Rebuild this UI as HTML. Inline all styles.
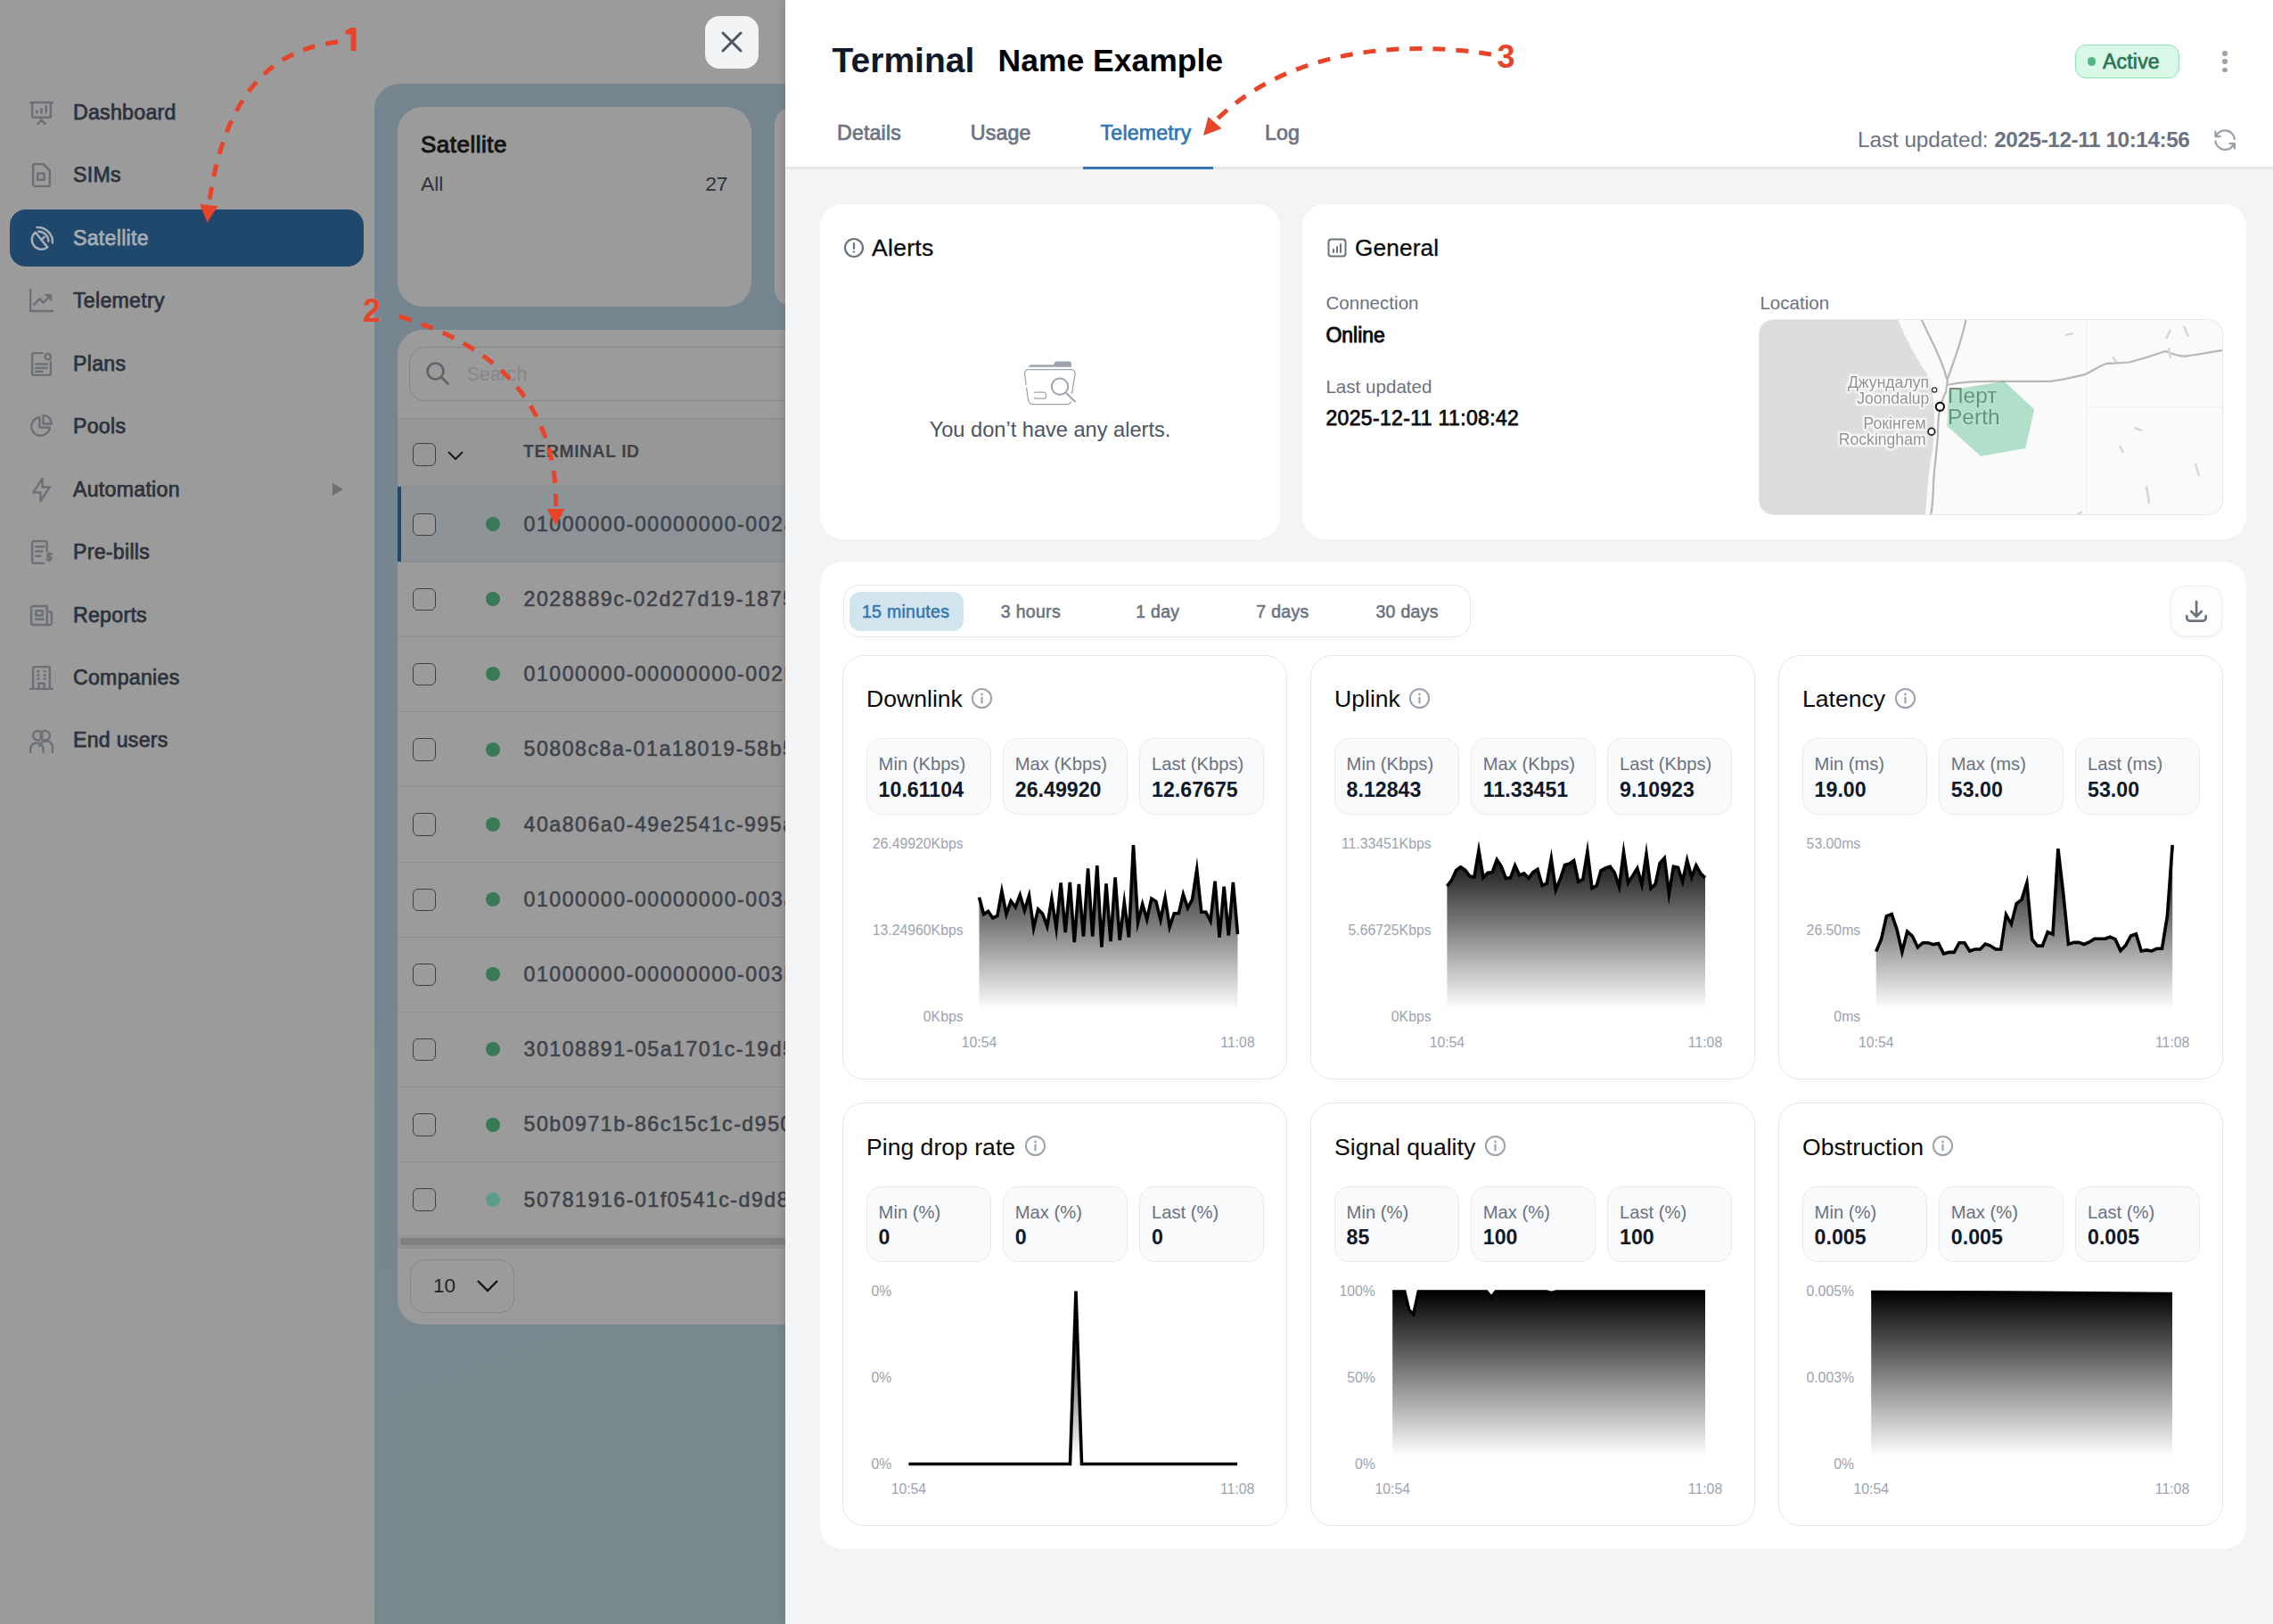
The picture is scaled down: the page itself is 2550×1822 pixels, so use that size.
<!DOCTYPE html>
<html><head><meta charset="utf-8"><style>
html,body{margin:0;padding:0;width:2550px;height:1822px;overflow:hidden;background:#fff;position:relative;font-family:"Liberation Sans", sans-serif}
.t{position:absolute;white-space:nowrap;font-family:"Liberation Sans", sans-serif}
</style></head><body>
<div style="position:absolute;left:0px;top:0px;width:881px;height:1822px;background:#9b9b9b"></div><div style="position:absolute;left:11px;top:235px;width:397px;height:64px;background:#1f486c;border-radius:18px"></div><svg style="position:absolute;left:33px;top:113.0px" width="27" height="27" viewBox="0 0 26 26"><path d="M1 2h24M3 2v15a1 1 0 0 0 1 1h18a1 1 0 0 0 1-1V2M13 18v3M9 25l4-4 4 4M8 13v-2M13 13V9M18 13V6" stroke="#6c7077" stroke-width="2.4" fill="none" stroke-linecap="round" stroke-linejoin="round"/></svg><div class="t" style="left:82.00px;top:114.95px;font-size:23.1px;line-height:23.1px;color:#2d323b;font-weight:400;letter-spacing:0.3px;-webkit-text-stroke:0.75px #2d323b">Dashboard</div><svg style="position:absolute;left:33px;top:183.4px" width="27" height="27" viewBox="0 0 26 26"><path d="M6 1h9l7 7v15a2 2 0 0 1-2 2H6a2 2 0 0 1-2-2V3a2 2 0 0 1 2-2zM9 11h7v7H9z" stroke="#6c7077" stroke-width="2.4" fill="none" stroke-linecap="round" stroke-linejoin="round"/></svg><div class="t" style="left:82.00px;top:185.40px;font-size:23.1px;line-height:23.1px;color:#2d323b;font-weight:400;letter-spacing:0.3px;-webkit-text-stroke:0.75px #2d323b">SIMs</div><svg style="position:absolute;left:33px;top:253.9px" width="27" height="27" viewBox="0 0 26 26"><path d="M6.5 6.5A9.6 9.6 0 0 0 19.5 22.5Z" stroke="#a9adb2" stroke-width="2.4" fill="none" stroke-linecap="round" stroke-linejoin="round"/><path d="M13 14.5l3-3M9.8 5.5A10.5 10.5 0 0 1 20.5 16.2M8.2 1A16 16 0 0 1 25 17.8" stroke="#a9adb2" stroke-width="2.4" fill="none" stroke-linecap="round" stroke-linejoin="round"/></svg><div class="t" style="left:82.00px;top:255.85px;font-size:23.1px;line-height:23.1px;color:#a9adb2;font-weight:400;letter-spacing:0.3px;-webkit-text-stroke:0.75px #a9adb2">Satellite</div><svg style="position:absolute;left:33px;top:324.4px" width="27" height="27" viewBox="0 0 26 26"><path d="M1 1v23h24M5 17l6-6 4 4 8-8M18 7h5v5" stroke="#6c7077" stroke-width="2.4" fill="none" stroke-linecap="round" stroke-linejoin="round"/></svg><div class="t" style="left:82.00px;top:326.30px;font-size:23.1px;line-height:23.1px;color:#2d323b;font-weight:400;letter-spacing:0.3px;-webkit-text-stroke:0.75px #2d323b">Telemetry</div><svg style="position:absolute;left:33px;top:394.8px" width="27" height="27" viewBox="0 0 26 26"><path d="M14 1H5a2 2 0 0 0-2 2v20a2 2 0 0 0 2 2h16a2 2 0 0 0 2-2V10M7 13h12M7 17h12M7 21h7" stroke="#6c7077" stroke-width="2.4" fill="none" stroke-linecap="round" stroke-linejoin="round"/><circle cx="20" cy="5" r="3" stroke="#6c7077" stroke-width="2.4" fill="none" stroke-linecap="round" stroke-linejoin="round"/></svg><div class="t" style="left:82.00px;top:396.75px;font-size:23.1px;line-height:23.1px;color:#2d323b;font-weight:400;letter-spacing:0.3px;-webkit-text-stroke:0.75px #2d323b">Plans</div><svg style="position:absolute;left:33px;top:465.2px" width="27" height="27" viewBox="0 0 26 26"><path d="M11 3a10 10 0 1 0 11 11H11z" stroke="#6c7077" stroke-width="2.4" fill="none" stroke-linecap="round" stroke-linejoin="round"/><path d="M15 1v9h9a9 9 0 0 0-9-9z" stroke="#6c7077" stroke-width="2.4" fill="none" stroke-linecap="round" stroke-linejoin="round"/></svg><div class="t" style="left:82.00px;top:467.20px;font-size:23.1px;line-height:23.1px;color:#2d323b;font-weight:400;letter-spacing:0.3px;-webkit-text-stroke:0.75px #2d323b">Pools</div><svg style="position:absolute;left:33px;top:535.7px" width="27" height="27" viewBox="0 0 26 26"><path d="M14 1v9h8L12 25v-9H4z" stroke="#6c7077" stroke-width="2.4" fill="none" stroke-linecap="round" stroke-linejoin="round"/></svg><div class="t" style="left:82.00px;top:537.65px;font-size:23.1px;line-height:23.1px;color:#2d323b;font-weight:400;letter-spacing:0.3px;-webkit-text-stroke:0.75px #2d323b">Automation</div><svg style="position:absolute;left:33px;top:606.2px" width="27" height="27" viewBox="0 0 26 26"><path d="M19 12V3a2 2 0 0 0-2-2H5a2 2 0 0 0-2 2v20a2 2 0 0 0 2 2h10M7 7h9M7 12h7M7 17h5" stroke="#6c7077" stroke-width="2.4" fill="none" stroke-linecap="round" stroke-linejoin="round"/><path d="M24 15h-3a1.5 1.5 0 0 0 0 3h1a1.5 1.5 0 0 1 0 3h-3M21.5 14v1.5M21.5 21v1.5" stroke="#6c7077" stroke-width="2.4" fill="none" stroke-linecap="round" stroke-linejoin="round"/></svg><div class="t" style="left:82.00px;top:608.10px;font-size:23.1px;line-height:23.1px;color:#2d323b;font-weight:400;letter-spacing:0.3px;-webkit-text-stroke:0.75px #2d323b">Pre-bills</div><svg style="position:absolute;left:33px;top:676.6px" width="27" height="27" viewBox="0 0 26 26"><path d="M4 3h15v20H4a2 2 0 0 1-2-2V5a2 2 0 0 1 2-2zM19 9h3a2 2 0 0 1 2 2v10a2 2 0 0 1-2 2h-3M7 8h7v5H7zM7 17h8" stroke="#6c7077" stroke-width="2.4" fill="none" stroke-linecap="round" stroke-linejoin="round"/></svg><div class="t" style="left:82.00px;top:678.55px;font-size:23.1px;line-height:23.1px;color:#2d323b;font-weight:400;letter-spacing:0.3px;-webkit-text-stroke:0.75px #2d323b">Reports</div><svg style="position:absolute;left:33px;top:747.1px" width="27" height="27" viewBox="0 0 26 26"><path d="M1 25h24M4 25V3a2 2 0 0 1 2-2h14a2 2 0 0 1 2 2v22M10 25v-6h6v6M9 6h1M9 10h1M9 14h1M16 6h1M16 10h1M16 14h1" stroke="#6c7077" stroke-width="2.4" fill="none" stroke-linecap="round" stroke-linejoin="round"/></svg><div class="t" style="left:82.00px;top:749.00px;font-size:23.1px;line-height:23.1px;color:#2d323b;font-weight:400;letter-spacing:0.3px;-webkit-text-stroke:0.75px #2d323b">Companies</div><svg style="position:absolute;left:33px;top:817.5px" width="27" height="27" viewBox="0 0 26 26"><circle cx="9" cy="7" r="5" stroke="#6c7077" stroke-width="2.4" fill="none" stroke-linecap="round" stroke-linejoin="round"/><circle cx="17" cy="7" r="5" stroke="#6c7077" stroke-width="2.4" fill="none" stroke-linecap="round" stroke-linejoin="round"/><path d="M1 25v-3a7 7 0 0 1 14 0v3M11 18a7 7 0 0 1 14 4v3" stroke="#6c7077" stroke-width="2.4" fill="none" stroke-linecap="round" stroke-linejoin="round"/></svg><div class="t" style="left:82.00px;top:819.45px;font-size:23.1px;line-height:23.1px;color:#2d323b;font-weight:400;letter-spacing:0.3px;-webkit-text-stroke:0.75px #2d323b">End users</div><svg style="position:absolute;left:372px;top:541px" width="14" height="16" viewBox="0 0 14 16"><path d="M1 1L13 8L1 15z" fill="#6c7077"/></svg><div style="position:absolute;left:420px;top:94px;width:461px;height:1728px;background:linear-gradient(160deg,#768690 0%,#768690 55%,#798a8c 100%);border-top-left-radius:28px"></div><div style="position:absolute;left:446px;top:120px;width:397px;height:224px;background:#9b9b9b;border-radius:28px"></div><div style="position:absolute;left:869px;top:120px;width:40px;height:224px;background:#9b9b9b;border-radius:28px"></div><div class="t" style="left:472.00px;top:148.99px;font-size:26px;line-height:26px;color:#141414;font-weight:400;letter-spacing:0.5px;-webkit-text-stroke:1px #141414">Satellite</div><div class="t" style="left:472.00px;top:194.50px;font-size:22.8px;line-height:22.8px;color:#2d323b;font-weight:400;letter-spacing:0px;">All</div><div class="t" style="right:1733.50px;top:194.50px;font-size:22.8px;line-height:22.8px;color:#2d323b;font-weight:400;letter-spacing:0px;">27</div><div style="position:absolute;left:446px;top:370px;width:480px;height:1116px;background:#9b9b9b;border-bottom-left-radius:28px;border-top-left-radius:28px"></div><div style="position:absolute;left:459px;top:389px;width:460px;height:61px;border:1.5px solid #858688;border-radius:18px;box-sizing:border-box"></div><svg style="position:absolute;left:476px;top:404px" width="30" height="30" viewBox="0 0 30 30"><circle cx="12.5" cy="12.5" r="9" stroke="#5e6269" stroke-width="2.6" fill="none"/><path d="M19 19l7.5 7.5" stroke="#5e6269" stroke-width="2.6" stroke-linecap="round"/></svg><div class="t" style="left:523.40px;top:410.30px;font-size:21.5px;line-height:21.5px;color:#85888d;font-weight:400;letter-spacing:0px;">Search</div><div style="position:absolute;left:446px;top:469px;width:435px;height:1.5px;background:#8b8b8b"></div><div style="position:absolute;left:446px;top:470px;width:435px;height:76px;background:#979797"></div><div style="position:absolute;left:446px;top:545px;width:435px;height:1.5px;background:#8e8e8e"></div><div style="position:absolute;left:463px;top:497px;width:26px;height:26px;border:1.6px solid #3d4047;border-radius:6px;box-sizing:border-box"></div><svg style="position:absolute;left:501px;top:504px" width="20" height="14" viewBox="0 0 20 14"><path d="M2 3l8 8 8-8" stroke="#1a1a1a" stroke-width="2" fill="none"/></svg><div class="t" style="left:587.00px;top:497.48px;font-size:19.4px;line-height:19.4px;color:#3d4148;font-weight:700;letter-spacing:0.55px;">TERMINAL ID</div><div style="position:absolute;left:446px;top:546px;width:435px;height:84px;background:#8e9398"></div><div style="position:absolute;left:446px;top:546px;width:3.5px;height:84px;background:#1f486c"></div><div style="position:absolute;left:463px;top:575.5px;width:25.5px;height:25.5px;border:1.6px solid #3d4047;border-radius:6px;box-sizing:border-box;background:#9b9b9b"></div><div style="position:absolute;left:545px;top:580.0px;width:16px;height:16px;border-radius:50%;background:#387a55"></div><div class="t" style="left:587.50px;top:576.76px;font-size:23.2px;line-height:23.2px;color:#3e424a;font-weight:400;letter-spacing:1.5px;-webkit-text-stroke:0.55px #3e424a">01000000-00000000-002a</div><div style="position:absolute;left:446px;top:629.7px;width:435px;height:1px;background:#8d8d8d"></div><div style="position:absolute;left:463px;top:659.7px;width:25.5px;height:25.5px;border:1.6px solid #3d4047;border-radius:6px;box-sizing:border-box;background:#9b9b9b"></div><div style="position:absolute;left:545px;top:664.2px;width:16px;height:16px;border-radius:50%;background:#387a55"></div><div class="t" style="left:587.50px;top:660.96px;font-size:23.2px;line-height:23.2px;color:#3e424a;font-weight:400;letter-spacing:1.5px;-webkit-text-stroke:0.55px #3e424a">2028889c-02d27d19-1875a</div><div style="position:absolute;left:446px;top:713.9px;width:435px;height:1px;background:#8d8d8d"></div><div style="position:absolute;left:463px;top:743.9px;width:25.5px;height:25.5px;border:1.6px solid #3d4047;border-radius:6px;box-sizing:border-box;background:#9b9b9b"></div><div style="position:absolute;left:545px;top:748.4px;width:16px;height:16px;border-radius:50%;background:#387a55"></div><div class="t" style="left:587.50px;top:745.16px;font-size:23.2px;line-height:23.2px;color:#3e424a;font-weight:400;letter-spacing:1.5px;-webkit-text-stroke:0.55px #3e424a">01000000-00000000-002b</div><div style="position:absolute;left:446px;top:798.1px;width:435px;height:1px;background:#8d8d8d"></div><div style="position:absolute;left:463px;top:828.1px;width:25.5px;height:25.5px;border:1.6px solid #3d4047;border-radius:6px;box-sizing:border-box;background:#9b9b9b"></div><div style="position:absolute;left:545px;top:832.6px;width:16px;height:16px;border-radius:50%;background:#387a55"></div><div class="t" style="left:587.50px;top:829.36px;font-size:23.2px;line-height:23.2px;color:#3e424a;font-weight:400;letter-spacing:1.5px;-webkit-text-stroke:0.55px #3e424a">50808c8a-01a18019-58b5a</div><div style="position:absolute;left:446px;top:882.3px;width:435px;height:1px;background:#8d8d8d"></div><div style="position:absolute;left:463px;top:912.3px;width:25.5px;height:25.5px;border:1.6px solid #3d4047;border-radius:6px;box-sizing:border-box;background:#9b9b9b"></div><div style="position:absolute;left:545px;top:916.8px;width:16px;height:16px;border-radius:50%;background:#387a55"></div><div class="t" style="left:587.50px;top:913.56px;font-size:23.2px;line-height:23.2px;color:#3e424a;font-weight:400;letter-spacing:1.5px;-webkit-text-stroke:0.55px #3e424a">40a806a0-49e2541c-995a</div><div style="position:absolute;left:446px;top:966.5px;width:435px;height:1px;background:#8d8d8d"></div><div style="position:absolute;left:463px;top:996.5px;width:25.5px;height:25.5px;border:1.6px solid #3d4047;border-radius:6px;box-sizing:border-box;background:#9b9b9b"></div><div style="position:absolute;left:545px;top:1001.0px;width:16px;height:16px;border-radius:50%;background:#387a55"></div><div class="t" style="left:587.50px;top:997.76px;font-size:23.2px;line-height:23.2px;color:#3e424a;font-weight:400;letter-spacing:1.5px;-webkit-text-stroke:0.55px #3e424a">01000000-00000000-003a</div><div style="position:absolute;left:446px;top:1050.7px;width:435px;height:1px;background:#8d8d8d"></div><div style="position:absolute;left:463px;top:1080.7px;width:25.5px;height:25.5px;border:1.6px solid #3d4047;border-radius:6px;box-sizing:border-box;background:#9b9b9b"></div><div style="position:absolute;left:545px;top:1085.2px;width:16px;height:16px;border-radius:50%;background:#387a55"></div><div class="t" style="left:587.50px;top:1081.96px;font-size:23.2px;line-height:23.2px;color:#3e424a;font-weight:400;letter-spacing:1.5px;-webkit-text-stroke:0.55px #3e424a">01000000-00000000-003b</div><div style="position:absolute;left:446px;top:1134.9px;width:435px;height:1px;background:#8d8d8d"></div><div style="position:absolute;left:463px;top:1164.9px;width:25.5px;height:25.5px;border:1.6px solid #3d4047;border-radius:6px;box-sizing:border-box;background:#9b9b9b"></div><div style="position:absolute;left:545px;top:1169.4px;width:16px;height:16px;border-radius:50%;background:#387a55"></div><div class="t" style="left:587.50px;top:1166.16px;font-size:23.2px;line-height:23.2px;color:#3e424a;font-weight:400;letter-spacing:1.5px;-webkit-text-stroke:0.55px #3e424a">30108891-05a1701c-19d5a</div><div style="position:absolute;left:446px;top:1219.1px;width:435px;height:1px;background:#8d8d8d"></div><div style="position:absolute;left:463px;top:1249.1px;width:25.5px;height:25.5px;border:1.6px solid #3d4047;border-radius:6px;box-sizing:border-box;background:#9b9b9b"></div><div style="position:absolute;left:545px;top:1253.6px;width:16px;height:16px;border-radius:50%;background:#387a55"></div><div class="t" style="left:587.50px;top:1250.36px;font-size:23.2px;line-height:23.2px;color:#3e424a;font-weight:400;letter-spacing:1.5px;-webkit-text-stroke:0.55px #3e424a">50b0971b-86c15c1c-d950a</div><div style="position:absolute;left:446px;top:1303.3000000000002px;width:435px;height:1px;background:#8d8d8d"></div><div style="position:absolute;left:463px;top:1333.3000000000002px;width:25.5px;height:25.5px;border:1.6px solid #3d4047;border-radius:6px;box-sizing:border-box;background:#9b9b9b"></div><div style="position:absolute;left:545px;top:1337.8px;width:16px;height:16px;border-radius:50%;background:#5a9d8c"></div><div class="t" style="left:587.50px;top:1334.56px;font-size:23.2px;line-height:23.2px;color:#3e424a;font-weight:400;letter-spacing:1.5px;-webkit-text-stroke:0.55px #3e424a">50781916-01f0541c-d9d8a</div><div style="position:absolute;left:446px;top:1386px;width:435px;height:13px;background:#939393"></div><div style="position:absolute;left:449px;top:1389px;width:432px;height:8px;background:#7f7f7f;border-radius:4px"></div><div style="position:absolute;left:446px;top:1399px;width:435px;height:1.5px;background:#8f8f8f"></div><div style="position:absolute;left:459.5px;top:1413px;width:117.5px;height:60px;border:1.5px solid #878787;border-radius:16px;box-sizing:border-box"></div><div class="t" style="left:486.00px;top:1431.95px;font-size:22.5px;line-height:22.5px;color:#1f2228;font-weight:400;letter-spacing:0px;">10</div><svg style="position:absolute;left:534px;top:1434px" width="26" height="18" viewBox="0 0 26 18"><path d="M2 3l11 11 11-11" stroke="#141414" stroke-width="2.4" fill="none"/></svg><div style="position:absolute;left:791px;top:18px;width:60px;height:59px;background:#f2f3f5;border-radius:16px"></div><svg style="position:absolute;left:807px;top:33px" width="28" height="28" viewBox="0 0 28 28"><path d="M4 4l20 20M24 4L4 24" stroke="#4b5563" stroke-width="3" stroke-linecap="round"/></svg><div style="position:absolute;left:881px;top:0px;width:1669px;height:1822px;background:#f3f4f6;box-shadow:-3px 0 10px rgba(0,0,0,0.10)"></div><div style="position:absolute;left:881px;top:0px;width:1669px;height:187px;background:#ffffff"></div><div style="position:absolute;left:881px;top:187px;width:1669px;height:3px;background:#e5e7eb"></div><div style="position:absolute;left:1215px;top:187px;width:146px;height:3px;background:#3276b5"></div><div class="t" style="left:933.60px;top:48.49px;font-size:39px;line-height:39px;color:#111827;font-weight:700;letter-spacing:0px;">Terminal</div><div class="t" style="left:1119.50px;top:50.95px;font-size:35.5px;line-height:35.5px;color:#000000;font-weight:700;letter-spacing:0px;">Name Example</div><div class="t" style="left:939.00px;top:137.86px;font-size:23.2px;line-height:23.2px;color:#6b7280;font-weight:400;letter-spacing:0.15px;-webkit-text-stroke:0.7px #6b7280">Details</div><div class="t" style="left:1088.80px;top:137.86px;font-size:23.2px;line-height:23.2px;color:#6b7280;font-weight:400;letter-spacing:0.15px;-webkit-text-stroke:0.7px #6b7280">Usage</div><div class="t" style="left:1234.60px;top:137.86px;font-size:23.2px;line-height:23.2px;color:#3176b3;font-weight:400;letter-spacing:0.15px;-webkit-text-stroke:0.7px #3176b3">Telemetry</div><div class="t" style="left:1419.00px;top:137.86px;font-size:23.2px;line-height:23.2px;color:#6b7280;font-weight:400;letter-spacing:0.15px;-webkit-text-stroke:0.7px #6b7280">Log</div><div class="t" style="left:2084.00px;top:144.65px;font-size:24.4px;line-height:24.4px;color:#6b7280;font-weight:400;letter-spacing:-0.1px;">Last updated: <b style="font-weight:700;letter-spacing:-0.45px">2025-12-11 10:14:56</b></div><svg style="position:absolute;left:2480px;top:140.9px" width="32.3" height="32.3" viewBox="0 0 24 24"><path d="M20 11A8.1 8.1 0 0 0 4.5 9M4 5v4h4M4 13a8.1 8.1 0 0 0 15.5 2M20 19v-4h-4" stroke="#9aa1ab" stroke-width="1.7" fill="none" stroke-linecap="round" stroke-linejoin="round"/></svg><div style="position:absolute;left:2328px;top:50px;width:117px;height:38px;background:#d9f8e7;border:1.5px solid #8fe3b6;border-radius:12px;box-sizing:border-box"></div><div style="position:absolute;left:2341.6px;top:64.4px;width:9.4px;height:9.4px;border-radius:50%;background:#55b786"></div><div class="t" style="left:2359.00px;top:58.03px;font-size:23px;line-height:23px;color:#2d7352;font-weight:400;letter-spacing:0.2px;-webkit-text-stroke:0.7px #2d7352">Active</div><div style="position:absolute;left:2493.1px;top:57.1px;width:5.8px;height:5.8px;border-radius:50%;background:#9ca3af"></div><div style="position:absolute;left:2493.1px;top:66.3px;width:5.8px;height:5.8px;border-radius:50%;background:#9ca3af"></div><div style="position:absolute;left:2493.1px;top:75.6px;width:5.8px;height:5.8px;border-radius:50%;background:#9ca3af"></div><div style="position:absolute;left:920px;top:229px;width:516px;height:376px;background:#fff;border-radius:26px"></div><div style="position:absolute;left:1461px;top:229px;width:1059px;height:376px;background:#fff;border-radius:26px"></div><div style="position:absolute;left:920px;top:630px;width:1600px;height:1108px;background:#fff;border-radius:26px"></div><svg style="position:absolute;left:946px;top:266px" width="24" height="24" viewBox="0 0 24 24"><circle cx="12" cy="12" r="10" stroke="#6b7280" stroke-width="2.2" fill="none"/><path d="M12 7v6" stroke="#6b7280" stroke-width="2.2" stroke-linecap="round"/><circle cx="12" cy="16.6" r="1.2" fill="#6b7280"/></svg><div class="t" style="left:978.00px;top:264.87px;font-size:26.5px;line-height:26.5px;color:#0a0a0a;font-weight:400;letter-spacing:0.3px;-webkit-text-stroke:0.3px #0a0a0a">Alerts</div><svg style="position:absolute;left:0;top:0;overflow:visible" width="1" height="1"><path d="M1153.6 411.8L1155.8 409.3H1181.7L1183.6 406.3Q1184.3 405.6 1185.2 405.6H1200.2Q1201.9 405.8 1201.9 407.5V411.8Z" fill="#9ca3af"/><path d="M1173 414.6H1202Q1206.2 414.8 1206.2 419.4L1202.4 441.8M1201.6 450.8Q1200.2 453.6 1197.8 453.6H1158.4Q1154.8 453.4 1153.6 449.2L1151.5 434.6M1151.1 431.8L1149.6 419.4Q1149.8 414.8 1153.6 414.6H1173" stroke="#9ca3af" stroke-width="1.25" fill="none"/><path d="M1160 440.6Q1160.6 440 1161.6 440H1171.2Q1173.6 440.2 1173.6 443.6Q1173.4 447.2 1171.2 447.2H1161.6Q1160.2 447 1159.9 445.6" stroke="#9ca3af" stroke-width="1.25" fill="none"/><circle cx="1189" cy="433.6" r="9.2" stroke="#9ca3af" stroke-width="2" fill="none"/><path d="M1196.4 441.2L1206 450.4" stroke="#9ca3af" stroke-width="2" stroke-linecap="round"/></svg><div class="t" style="left:1178.00px;transform:translateX(-50%);top:471.32px;font-size:23.6px;line-height:23.6px;color:#4b5563;font-weight:400;letter-spacing:0px;">You don’t have any alerts.</div><svg style="position:absolute;left:1489px;top:267px" width="22" height="22" viewBox="0 0 22 22"><rect x="1.5" y="1.5" width="19" height="19" rx="3" stroke="#6b7280" stroke-width="2" fill="none"/><path d="M7 16v-3M11 16v-6M15 16V7" stroke="#6b7280" stroke-width="2" stroke-linecap="round"/></svg><div class="t" style="left:1520.00px;top:265.12px;font-size:26.2px;line-height:26.2px;color:#0a0a0a;font-weight:400;letter-spacing:0.15px;-webkit-text-stroke:0.3px #0a0a0a">General</div><div class="t" style="left:1487.40px;top:330.26px;font-size:20.6px;line-height:20.6px;color:#6b7280;font-weight:400;letter-spacing:0px;">Connection</div><div class="t" style="left:1487.40px;top:364.83px;font-size:23px;line-height:23px;color:#0a0a0a;font-weight:400;letter-spacing:0px;-webkit-text-stroke:0.9px #0a0a0a">Online</div><div class="t" style="left:1487.40px;top:423.76px;font-size:20.6px;line-height:20.6px;color:#6b7280;font-weight:400;letter-spacing:0px;">Last updated</div><div class="t" style="left:1487.40px;top:458.33px;font-size:23px;line-height:23px;color:#0a0a0a;font-weight:400;letter-spacing:0px;-webkit-text-stroke:0.75px #0a0a0a"><span style="letter-spacing:0.35px">2025-12-11 11:08:42</span></div><div class="t" style="left:1974.40px;top:330.26px;font-size:20.6px;line-height:20.6px;color:#6b7280;font-weight:400;letter-spacing:0px;">Location</div><svg style="position:absolute;left:1973px;top:358px" width="521" height="220" viewBox="1973 358 521 220">
<defs><clipPath id="mc"><rect x="1973.5" y="358.5" width="520" height="219" rx="16"/></clipPath>
<filter id="halo" x="-20%" y="-50%" width="140%" height="200%"><feMorphology operator="dilate" radius="1.6" in="SourceAlpha" result="d"/><feGaussianBlur in="d" stdDeviation="1.2" result="b"/><feFlood flood-color="#fff" flood-opacity="0.85"/><feComposite in2="b" operator="in" result="h"/><feMerge><feMergeNode in="h"/><feMergeNode in="SourceGraphic"/></feMerge></filter></defs>
<g clip-path="url(#mc)">
<rect x="1973" y="358" width="521" height="220" fill="#fafafa"/>
<path d="M1973 358H2129C2140 385 2152 405 2162 420C2170 440 2172 470 2168 505C2163 530 2162 555 2160 578H1973Z" fill="#dcdddd"/>
<path d="M2341 358V578M2341 456.7H2494" stroke="#efefef" stroke-width="1"/>
<path d="M2155.6 358C2165 380 2178 400 2184 425M2205.8 358C2200 385 2192 405 2185 425L2183 440C2175 455 2174 470 2174 490L2171 520C2168 540 2170 560 2166 578" stroke="#b9b5b0" stroke-width="2.2" fill="none"/>
<path d="M2185 432C2200 428 2215 428 2236 427.8L2301 427.8C2315 426 2330 422 2338.7 420.3C2350 415 2356 410 2363.7 407.8L2388.8 406.5C2405 402 2418 398 2429 394C2440 398 2445 400 2451.5 399.7C2470 397 2480 395 2494 393.2" stroke="#b9b5b0" stroke-width="2.2" fill="none"/>
<path d="M2317 376l9-2M2370 400l4 6M2430 380l5-10M2455 378l-5-12M2433 390l2 12M2395 480l8 3M2463 520l4 14M2408 545l3 20M2378 500l4 8M2330 578l6-4" stroke="#d6d6d6" stroke-width="2.5"/>
<g filter="url(#halo)" font-family="Liberation Sans" fill="#8d8d8d">
<text x="2164" y="435" font-size="17.6" text-anchor="end">Джундалуп</text>
<text x="2164.4" y="452.6" font-size="17.6" text-anchor="end">Joondalup</text>
<text x="2160.6" y="481.3" font-size="17.6" text-anchor="end">Рокінгем</text>
<text x="2160.6" y="498.7" font-size="17.6" text-anchor="end">Rockingham</text>
<text x="2185" y="452.3" font-size="24.5" fill="#858585">Перт</text>
<text x="2185" y="476" font-size="24.5" fill="#858585">Perth</text>
</g>
<path d="M2185.7 437.9L2248.4 427.8L2282.2 459.2L2272.2 503L2222 511.8L2184.5 478Z" fill="rgb(34,170,102)" fill-opacity="0.33"/>
<circle cx="2170.2" cy="437.4" r="2.6" fill="#fff" stroke="#333" stroke-width="1.3"/>
<circle cx="2176.4" cy="456.2" r="4.6" fill="#fff" stroke="#111" stroke-width="2.2"/>
<circle cx="2166.9" cy="484.2" r="3.8" fill="#fff" stroke="#222" stroke-width="1.8"/>
</g>
<rect x="1973.5" y="358.5" width="520" height="219" rx="16" fill="none" stroke="#e5e7eb" stroke-width="1"/>
</svg><div style="position:absolute;left:946px;top:656px;width:704px;height:59px;border:1.5px solid #e5e7eb;border-radius:18px;box-sizing:border-box"></div><div style="position:absolute;left:953px;top:663.5px;width:127.5px;height:44px;background:#d2e5ef;border-radius:12px"></div><div class="t" style="left:966.90px;top:676.89px;font-size:19.5px;line-height:19.5px;color:#3676ad;font-weight:400;letter-spacing:0.3px;-webkit-text-stroke:0.55px #3676ad">15 minutes</div><div class="t" style="left:1122.80px;top:676.89px;font-size:19.5px;line-height:19.5px;color:#6b7280;font-weight:400;letter-spacing:0.3px;-webkit-text-stroke:0.55px #6b7280">3 hours</div><div class="t" style="left:1274.20px;top:676.89px;font-size:19.5px;line-height:19.5px;color:#6b7280;font-weight:400;letter-spacing:0.3px;-webkit-text-stroke:0.55px #6b7280">1 day</div><div class="t" style="left:1409.30px;top:676.89px;font-size:19.5px;line-height:19.5px;color:#6b7280;font-weight:400;letter-spacing:0.3px;-webkit-text-stroke:0.55px #6b7280">7 days</div><div class="t" style="left:1543.40px;top:676.89px;font-size:19.5px;line-height:19.5px;color:#6b7280;font-weight:400;letter-spacing:0.3px;-webkit-text-stroke:0.55px #6b7280">30 days</div><div style="position:absolute;left:2434.5px;top:656.5px;width:58.8px;height:57.6px;background:#fdfdfd;border:1px solid #eceef1;border-radius:16px;box-sizing:border-box;box-shadow:0 1.5px 3px rgba(0,0,0,0.06)"></div><svg style="position:absolute;left:0;top:0;overflow:visible" width="1" height="1"><path d="M2464.1 675v16.5M2458.4 686l5.7 5.7 5.7-5.7M2453.3 691.2v1.8a3.6 3.6 0 0 0 3.6 3.6h14.2a3.6 3.6 0 0 0 3.6-3.6v-1.8" stroke="#6b7280" stroke-width="2.7" fill="none" stroke-linecap="round" stroke-linejoin="round"/></svg><div style="position:absolute;left:945px;top:735px;width:498.5px;height:475.5px;border:1.6px solid #e5e7eb;border-radius:24px;box-sizing:border-box;background:#fff"></div><div class="t" style="left:972.00px;top:771.48px;font-size:26.6px;line-height:26.6px;color:#0a0a0a;font-weight:400;letter-spacing:0px;">Downlink<svg style="display:inline-block;vertical-align:top;margin-left:9.5px;margin-top:-0.5px" width="25" height="25" viewBox="0 0 25 25"><circle cx="12.5" cy="12.5" r="10.6" stroke="#9ca3af" stroke-width="2" fill="none"/><path d="M12.5 11.5v6" stroke="#9ca3af" stroke-width="2.2" stroke-linecap="round"/><circle cx="12.5" cy="7.9" r="1.3" fill="#9ca3af"/></svg></div><div style="position:absolute;left:972.0px;top:828.2px;width:139.5px;height:85.5px;background:#f9fafb;border:1.5px solid #e8eaed;border-radius:17px;box-sizing:border-box"></div><div class="t" style="left:985.60px;top:847.40px;font-size:20.2px;line-height:20.2px;color:#6b7280;font-weight:400;letter-spacing:0px;">Min (Kbps)</div><div class="t" style="left:985.60px;top:875.06px;font-size:23.2px;line-height:23.2px;color:#111827;font-weight:700;letter-spacing:0px;">10.61104</div><div style="position:absolute;left:1125.2px;top:828.2px;width:139.5px;height:85.5px;background:#f9fafb;border:1.5px solid #e8eaed;border-radius:17px;box-sizing:border-box"></div><div class="t" style="left:1138.80px;top:847.40px;font-size:20.2px;line-height:20.2px;color:#6b7280;font-weight:400;letter-spacing:0px;">Max (Kbps)</div><div class="t" style="left:1138.80px;top:875.06px;font-size:23.2px;line-height:23.2px;color:#111827;font-weight:700;letter-spacing:0px;">26.49920</div><div style="position:absolute;left:1278.4px;top:828.2px;width:139.5px;height:85.5px;background:#f9fafb;border:1.5px solid #e8eaed;border-radius:17px;box-sizing:border-box"></div><div class="t" style="left:1292.00px;top:847.40px;font-size:20.2px;line-height:20.2px;color:#6b7280;font-weight:400;letter-spacing:0px;">Last (Kbps)</div><div class="t" style="left:1292.00px;top:875.06px;font-size:23.2px;line-height:23.2px;color:#111827;font-weight:700;letter-spacing:0px;">12.67675</div><div class="t" style="right:1469.40px;top:939.23px;font-size:15.8px;line-height:15.8px;color:#9ca3af;font-weight:400;letter-spacing:0px;">26.49920Kbps</div><div class="t" style="right:1469.40px;top:1036.23px;font-size:15.8px;line-height:15.8px;color:#9ca3af;font-weight:400;letter-spacing:0px;">13.24960Kbps</div><div class="t" style="right:1469.40px;top:1133.23px;font-size:15.8px;line-height:15.8px;color:#9ca3af;font-weight:400;letter-spacing:0px;">0Kbps</div><div class="t" style="left:1098.50px;transform:translateX(-50%);top:1161.83px;font-size:15.8px;line-height:15.8px;color:#9ca3af;font-weight:400;letter-spacing:0px;">10:54</div><div class="t" style="left:1388.50px;transform:translateX(-50%);top:1161.83px;font-size:15.8px;line-height:15.8px;color:#9ca3af;font-weight:400;letter-spacing:0px;">11:08</div><svg style="position:absolute;left:0;top:0;overflow:visible" width="2550" height="1822"><defs><linearGradient id="g_dl" x1="0" y1="947" x2="0" y2="1133" gradientUnits="userSpaceOnUse"><stop offset="0" stop-color="#000" stop-opacity="1"/><stop offset="1" stop-color="#000" stop-opacity="0"/></linearGradient><clipPath id="c_dl"><rect x="1088.5" y="945" width="310.0" height="204"/></clipPath></defs><path d="M1098.5,1141 L1098.5,1006.7 1103.6,1025.6 1108.7,1022.4 1113.8,1029.9 1118.9,1027.5 1123.9,999.8 1129.0,1025.6 1134.1,1010.8 1139.2,1017.7 1144.3,1004.1 1149.4,1021.4 1154.5,1004.7 1159.6,1041.2 1164.6,1020.0 1169.7,1025.2 1174.8,1039.3 1179.9,1008.1 1185.0,1041.4 1190.1,990.4 1195.2,1046.0 1200.3,990.0 1205.3,1057.1 1210.4,991.8 1215.5,1050.6 1220.6,974.3 1225.7,1050.6 1230.8,971.0 1235.9,1062.6 1241.0,991.4 1246.0,1056.2 1251.1,984.4 1256.2,1054.8 1261.3,1012.2 1266.4,1051.6 1271.5,948.0 1276.6,1035.1 1281.7,1014.4 1286.7,1031.4 1291.8,1008.1 1296.9,1011.3 1302.0,1031.8 1307.1,1007.1 1312.2,1040.0 1317.3,1024.7 1322.4,1024.7 1327.4,1003.3 1332.5,1018.7 1337.6,1009.0 1342.7,975.5 1347.8,1023.3 1352.9,1023.3 1358.0,1033.4 1363.1,988.6 1368.1,1051.6 1373.2,994.6 1378.3,1049.7 1383.4,990.0 1388.5,1048.2 L1388.5,1141 Z" fill="url(#g_dl)"/><polyline points="1098.5,1006.7 1103.6,1025.6 1108.7,1022.4 1113.8,1029.9 1118.9,1027.5 1123.9,999.8 1129.0,1025.6 1134.1,1010.8 1139.2,1017.7 1144.3,1004.1 1149.4,1021.4 1154.5,1004.7 1159.6,1041.2 1164.6,1020.0 1169.7,1025.2 1174.8,1039.3 1179.9,1008.1 1185.0,1041.4 1190.1,990.4 1195.2,1046.0 1200.3,990.0 1205.3,1057.1 1210.4,991.8 1215.5,1050.6 1220.6,974.3 1225.7,1050.6 1230.8,971.0 1235.9,1062.6 1241.0,991.4 1246.0,1056.2 1251.1,984.4 1256.2,1054.8 1261.3,1012.2 1266.4,1051.6 1271.5,948.0 1276.6,1035.1 1281.7,1014.4 1286.7,1031.4 1291.8,1008.1 1296.9,1011.3 1302.0,1031.8 1307.1,1007.1 1312.2,1040.0 1317.3,1024.7 1322.4,1024.7 1327.4,1003.3 1332.5,1018.7 1337.6,1009.0 1342.7,975.5 1347.8,1023.3 1352.9,1023.3 1358.0,1033.4 1363.1,988.6 1368.1,1051.6 1373.2,994.6 1378.3,1049.7 1383.4,990.0 1388.5,1048.2" fill="none" stroke="#000" stroke-width="3.6" stroke-linejoin="miter" stroke-miterlimit="10"/></svg><div style="position:absolute;left:1470px;top:735px;width:498.5px;height:475.5px;border:1.6px solid #e5e7eb;border-radius:24px;box-sizing:border-box;background:#fff"></div><div class="t" style="left:1497.00px;top:771.48px;font-size:26.6px;line-height:26.6px;color:#0a0a0a;font-weight:400;letter-spacing:0px;">Uplink<svg style="display:inline-block;vertical-align:top;margin-left:9.5px;margin-top:-0.5px" width="25" height="25" viewBox="0 0 25 25"><circle cx="12.5" cy="12.5" r="10.6" stroke="#9ca3af" stroke-width="2" fill="none"/><path d="M12.5 11.5v6" stroke="#9ca3af" stroke-width="2.2" stroke-linecap="round"/><circle cx="12.5" cy="7.9" r="1.3" fill="#9ca3af"/></svg></div><div style="position:absolute;left:1497.0px;top:828.2px;width:139.5px;height:85.5px;background:#f9fafb;border:1.5px solid #e8eaed;border-radius:17px;box-sizing:border-box"></div><div class="t" style="left:1510.60px;top:847.40px;font-size:20.2px;line-height:20.2px;color:#6b7280;font-weight:400;letter-spacing:0px;">Min (Kbps)</div><div class="t" style="left:1510.60px;top:875.06px;font-size:23.2px;line-height:23.2px;color:#111827;font-weight:700;letter-spacing:0px;">8.12843</div><div style="position:absolute;left:1650.2px;top:828.2px;width:139.5px;height:85.5px;background:#f9fafb;border:1.5px solid #e8eaed;border-radius:17px;box-sizing:border-box"></div><div class="t" style="left:1663.80px;top:847.40px;font-size:20.2px;line-height:20.2px;color:#6b7280;font-weight:400;letter-spacing:0px;">Max (Kbps)</div><div class="t" style="left:1663.80px;top:875.06px;font-size:23.2px;line-height:23.2px;color:#111827;font-weight:700;letter-spacing:0px;">11.33451</div><div style="position:absolute;left:1803.4px;top:828.2px;width:139.5px;height:85.5px;background:#f9fafb;border:1.5px solid #e8eaed;border-radius:17px;box-sizing:border-box"></div><div class="t" style="left:1817.00px;top:847.40px;font-size:20.2px;line-height:20.2px;color:#6b7280;font-weight:400;letter-spacing:0px;">Last (Kbps)</div><div class="t" style="left:1817.00px;top:875.06px;font-size:23.2px;line-height:23.2px;color:#111827;font-weight:700;letter-spacing:0px;">9.10923</div><div class="t" style="right:944.40px;top:939.23px;font-size:15.8px;line-height:15.8px;color:#9ca3af;font-weight:400;letter-spacing:0px;">11.33451Kbps</div><div class="t" style="right:944.40px;top:1036.23px;font-size:15.8px;line-height:15.8px;color:#9ca3af;font-weight:400;letter-spacing:0px;">5.66725Kbps</div><div class="t" style="right:944.40px;top:1133.23px;font-size:15.8px;line-height:15.8px;color:#9ca3af;font-weight:400;letter-spacing:0px;">0Kbps</div><div class="t" style="left:1623.40px;transform:translateX(-50%);top:1161.83px;font-size:15.8px;line-height:15.8px;color:#9ca3af;font-weight:400;letter-spacing:0px;">10:54</div><div class="t" style="left:1913.00px;transform:translateX(-50%);top:1161.83px;font-size:15.8px;line-height:15.8px;color:#9ca3af;font-weight:400;letter-spacing:0px;">11:08</div><svg style="position:absolute;left:0;top:0;overflow:visible" width="2550" height="1822"><defs><linearGradient id="g_ul" x1="0" y1="947" x2="0" y2="1133" gradientUnits="userSpaceOnUse"><stop offset="0" stop-color="#000" stop-opacity="1"/><stop offset="1" stop-color="#000" stop-opacity="0"/></linearGradient><clipPath id="c_ul"><rect x="1613.4" y="945" width="309.5999999999999" height="204"/></clipPath></defs><path d="M1623.4,1141 L1623.4,994.1 1628.5,987.7 1633.6,976.5 1638.6,972.8 1643.7,976.1 1648.8,983.1 1653.9,984.1 1659.0,953.9 1664.0,984.6 1669.1,979.3 1674.2,978.6 1679.3,964.5 1684.4,972.2 1689.4,985.6 1694.5,984.9 1699.6,970.9 1704.7,982.0 1709.8,979.9 1714.9,985.3 1719.9,978.6 1725.0,975.4 1730.1,993.5 1735.2,991.2 1740.3,963.0 1745.3,998.5 1750.4,986.3 1755.5,970.5 1760.6,969.1 1765.7,965.6 1770.7,989.1 1775.8,986.6 1780.9,955.3 1786.0,996.5 1791.1,993.7 1796.1,976.8 1801.2,974.0 1806.3,972.2 1811.4,979.3 1816.5,995.1 1821.5,955.9 1826.6,990.4 1831.7,982.4 1836.8,974.1 1841.9,992.5 1847.0,958.1 1852.0,996.9 1857.1,991.9 1862.2,968.4 1867.3,962.7 1872.4,1002.7 1877.4,972.1 1882.5,973.3 1887.6,989.1 1892.7,965.0 1897.8,984.2 1902.8,971.0 1907.9,980.0 1913.0,984.9 L1913.0,1141 Z" fill="url(#g_ul)"/><polyline points="1623.4,994.1 1628.5,987.7 1633.6,976.5 1638.6,972.8 1643.7,976.1 1648.8,983.1 1653.9,984.1 1659.0,953.9 1664.0,984.6 1669.1,979.3 1674.2,978.6 1679.3,964.5 1684.4,972.2 1689.4,985.6 1694.5,984.9 1699.6,970.9 1704.7,982.0 1709.8,979.9 1714.9,985.3 1719.9,978.6 1725.0,975.4 1730.1,993.5 1735.2,991.2 1740.3,963.0 1745.3,998.5 1750.4,986.3 1755.5,970.5 1760.6,969.1 1765.7,965.6 1770.7,989.1 1775.8,986.6 1780.9,955.3 1786.0,996.5 1791.1,993.7 1796.1,976.8 1801.2,974.0 1806.3,972.2 1811.4,979.3 1816.5,995.1 1821.5,955.9 1826.6,990.4 1831.7,982.4 1836.8,974.1 1841.9,992.5 1847.0,958.1 1852.0,996.9 1857.1,991.9 1862.2,968.4 1867.3,962.7 1872.4,1002.7 1877.4,972.1 1882.5,973.3 1887.6,989.1 1892.7,965.0 1897.8,984.2 1902.8,971.0 1907.9,980.0 1913.0,984.9" fill="none" stroke="#000" stroke-width="3.6" stroke-linejoin="miter" stroke-miterlimit="10"/></svg><div style="position:absolute;left:1995px;top:735px;width:498.5px;height:475.5px;border:1.6px solid #e5e7eb;border-radius:24px;box-sizing:border-box;background:#fff"></div><div class="t" style="left:2022.00px;top:771.48px;font-size:26.6px;line-height:26.6px;color:#0a0a0a;font-weight:400;letter-spacing:0px;">Latency<svg style="display:inline-block;vertical-align:top;margin-left:9.5px;margin-top:-0.5px" width="25" height="25" viewBox="0 0 25 25"><circle cx="12.5" cy="12.5" r="10.6" stroke="#9ca3af" stroke-width="2" fill="none"/><path d="M12.5 11.5v6" stroke="#9ca3af" stroke-width="2.2" stroke-linecap="round"/><circle cx="12.5" cy="7.9" r="1.3" fill="#9ca3af"/></svg></div><div style="position:absolute;left:2022.0px;top:828.2px;width:139.5px;height:85.5px;background:#f9fafb;border:1.5px solid #e8eaed;border-radius:17px;box-sizing:border-box"></div><div class="t" style="left:2035.60px;top:847.40px;font-size:20.2px;line-height:20.2px;color:#6b7280;font-weight:400;letter-spacing:0px;">Min (ms)</div><div class="t" style="left:2035.60px;top:875.06px;font-size:23.2px;line-height:23.2px;color:#111827;font-weight:700;letter-spacing:0px;">19.00</div><div style="position:absolute;left:2175.2px;top:828.2px;width:139.5px;height:85.5px;background:#f9fafb;border:1.5px solid #e8eaed;border-radius:17px;box-sizing:border-box"></div><div class="t" style="left:2188.80px;top:847.40px;font-size:20.2px;line-height:20.2px;color:#6b7280;font-weight:400;letter-spacing:0px;">Max (ms)</div><div class="t" style="left:2188.80px;top:875.06px;font-size:23.2px;line-height:23.2px;color:#111827;font-weight:700;letter-spacing:0px;">53.00</div><div style="position:absolute;left:2328.4px;top:828.2px;width:139.5px;height:85.5px;background:#f9fafb;border:1.5px solid #e8eaed;border-radius:17px;box-sizing:border-box"></div><div class="t" style="left:2342.00px;top:847.40px;font-size:20.2px;line-height:20.2px;color:#6b7280;font-weight:400;letter-spacing:0px;">Last (ms)</div><div class="t" style="left:2342.00px;top:875.06px;font-size:23.2px;line-height:23.2px;color:#111827;font-weight:700;letter-spacing:0px;">53.00</div><div class="t" style="right:462.80px;top:939.23px;font-size:15.8px;line-height:15.8px;color:#9ca3af;font-weight:400;letter-spacing:0px;">53.00ms</div><div class="t" style="right:462.80px;top:1036.23px;font-size:15.8px;line-height:15.8px;color:#9ca3af;font-weight:400;letter-spacing:0px;">26.50ms</div><div class="t" style="right:462.80px;top:1133.23px;font-size:15.8px;line-height:15.8px;color:#9ca3af;font-weight:400;letter-spacing:0px;">0ms</div><div class="t" style="left:2104.70px;transform:translateX(-50%);top:1161.83px;font-size:15.8px;line-height:15.8px;color:#9ca3af;font-weight:400;letter-spacing:0px;">10:54</div><div class="t" style="left:2437.20px;transform:translateX(-50%);top:1161.83px;font-size:15.8px;line-height:15.8px;color:#9ca3af;font-weight:400;letter-spacing:0px;">11:08</div><svg style="position:absolute;left:0;top:0;overflow:visible" width="2550" height="1822"><defs><linearGradient id="g_lat" x1="0" y1="947" x2="0" y2="1133" gradientUnits="userSpaceOnUse"><stop offset="0" stop-color="#000" stop-opacity="1"/><stop offset="1" stop-color="#000" stop-opacity="0"/></linearGradient><clipPath id="c_lat"><rect x="2094.7" y="945" width="352.5" height="204"/></clipPath></defs><path d="M2104.7,1141 L2104.7,1067.6 2110.5,1053.8 2116.4,1027.9 2122.2,1025.6 2128.0,1042.6 2133.9,1068.0 2139.7,1045.0 2145.5,1050.3 2151.4,1062.8 2157.2,1057.7 2163.0,1057.7 2168.9,1059.6 2174.7,1058.5 2180.5,1070.1 2186.4,1068.4 2192.2,1068.4 2198.0,1057.7 2203.9,1057.7 2209.7,1067.0 2215.5,1065.0 2221.4,1065.0 2227.2,1059.0 2233.0,1061.1 2238.9,1065.0 2244.7,1065.0 2250.5,1026.2 2256.4,1036.7 2262.2,1013.7 2268.0,1009.4 2273.9,990.4 2279.7,1053.7 2285.5,1061.1 2291.4,1061.1 2297.2,1045.6 2303.0,1048.1 2308.9,952.1 2314.7,1002.0 2320.5,1059.4 2326.4,1057.4 2332.2,1057.4 2338.0,1059.5 2343.9,1057.0 2349.7,1053.3 2355.5,1053.3 2361.4,1053.3 2367.2,1051.2 2373.0,1053.7 2378.9,1066.6 2384.7,1060.7 2390.5,1050.0 2396.4,1047.9 2402.2,1067.0 2408.0,1065.9 2413.9,1066.9 2419.7,1064.3 2425.5,1064.3 2431.4,1027.9 2437.2,948.0 L2437.2,1141 Z" fill="url(#g_lat)"/><polyline points="2104.7,1067.6 2110.5,1053.8 2116.4,1027.9 2122.2,1025.6 2128.0,1042.6 2133.9,1068.0 2139.7,1045.0 2145.5,1050.3 2151.4,1062.8 2157.2,1057.7 2163.0,1057.7 2168.9,1059.6 2174.7,1058.5 2180.5,1070.1 2186.4,1068.4 2192.2,1068.4 2198.0,1057.7 2203.9,1057.7 2209.7,1067.0 2215.5,1065.0 2221.4,1065.0 2227.2,1059.0 2233.0,1061.1 2238.9,1065.0 2244.7,1065.0 2250.5,1026.2 2256.4,1036.7 2262.2,1013.7 2268.0,1009.4 2273.9,990.4 2279.7,1053.7 2285.5,1061.1 2291.4,1061.1 2297.2,1045.6 2303.0,1048.1 2308.9,952.1 2314.7,1002.0 2320.5,1059.4 2326.4,1057.4 2332.2,1057.4 2338.0,1059.5 2343.9,1057.0 2349.7,1053.3 2355.5,1053.3 2361.4,1053.3 2367.2,1051.2 2373.0,1053.7 2378.9,1066.6 2384.7,1060.7 2390.5,1050.0 2396.4,1047.9 2402.2,1067.0 2408.0,1065.9 2413.9,1066.9 2419.7,1064.3 2425.5,1064.3 2431.4,1027.9 2437.2,948.0" fill="none" stroke="#000" stroke-width="3.6" stroke-linejoin="miter" stroke-miterlimit="10"/></svg><div style="position:absolute;left:945px;top:1236.5px;width:498.5px;height:475.5px;border:1.6px solid #e5e7eb;border-radius:24px;box-sizing:border-box;background:#fff"></div><div class="t" style="left:972.00px;top:1273.68px;font-size:26.6px;line-height:26.6px;color:#0a0a0a;font-weight:400;letter-spacing:0px;">Ping drop rate<svg style="display:inline-block;vertical-align:top;margin-left:9.5px;margin-top:-0.5px" width="25" height="25" viewBox="0 0 25 25"><circle cx="12.5" cy="12.5" r="10.6" stroke="#9ca3af" stroke-width="2" fill="none"/><path d="M12.5 11.5v6" stroke="#9ca3af" stroke-width="2.2" stroke-linecap="round"/><circle cx="12.5" cy="7.9" r="1.3" fill="#9ca3af"/></svg></div><div style="position:absolute;left:972.0px;top:1330.5px;width:139.5px;height:85.5px;background:#f9fafb;border:1.5px solid #e8eaed;border-radius:17px;box-sizing:border-box"></div><div class="t" style="left:985.60px;top:1349.70px;font-size:20.2px;line-height:20.2px;color:#6b7280;font-weight:400;letter-spacing:0px;">Min (%)</div><div class="t" style="left:985.60px;top:1377.36px;font-size:23.2px;line-height:23.2px;color:#111827;font-weight:700;letter-spacing:0px;">0</div><div style="position:absolute;left:1125.2px;top:1330.5px;width:139.5px;height:85.5px;background:#f9fafb;border:1.5px solid #e8eaed;border-radius:17px;box-sizing:border-box"></div><div class="t" style="left:1138.80px;top:1349.70px;font-size:20.2px;line-height:20.2px;color:#6b7280;font-weight:400;letter-spacing:0px;">Max (%)</div><div class="t" style="left:1138.80px;top:1377.36px;font-size:23.2px;line-height:23.2px;color:#111827;font-weight:700;letter-spacing:0px;">0</div><div style="position:absolute;left:1278.4px;top:1330.5px;width:139.5px;height:85.5px;background:#f9fafb;border:1.5px solid #e8eaed;border-radius:17px;box-sizing:border-box"></div><div class="t" style="left:1292.00px;top:1349.70px;font-size:20.2px;line-height:20.2px;color:#6b7280;font-weight:400;letter-spacing:0px;">Last (%)</div><div class="t" style="left:1292.00px;top:1377.36px;font-size:23.2px;line-height:23.2px;color:#111827;font-weight:700;letter-spacing:0px;">0</div><div class="t" style="right:1549.70px;top:1440.73px;font-size:15.8px;line-height:15.8px;color:#9ca3af;font-weight:400;letter-spacing:0px;">0%</div><div class="t" style="right:1549.70px;top:1537.73px;font-size:15.8px;line-height:15.8px;color:#9ca3af;font-weight:400;letter-spacing:0px;">0%</div><div class="t" style="right:1549.70px;top:1634.73px;font-size:15.8px;line-height:15.8px;color:#9ca3af;font-weight:400;letter-spacing:0px;">0%</div><div class="t" style="left:1019.40px;transform:translateX(-50%);top:1663.33px;font-size:15.8px;line-height:15.8px;color:#9ca3af;font-weight:400;letter-spacing:0px;">10:54</div><div class="t" style="left:1388.10px;transform:translateX(-50%);top:1663.33px;font-size:15.8px;line-height:15.8px;color:#9ca3af;font-weight:400;letter-spacing:0px;">11:08</div><svg style="position:absolute;left:0;top:0;overflow:visible" width="2550" height="1822"><defs><linearGradient id="g_ping" x1="0" y1="1448.5" x2="0" y2="1634.5" gradientUnits="userSpaceOnUse"><stop offset="0" stop-color="#000" stop-opacity="1"/><stop offset="1" stop-color="#000" stop-opacity="0"/></linearGradient><clipPath id="c_ping"><rect x="1009.4" y="1446.5" width="388.69999999999993" height="204.0"/></clipPath></defs><path d="M1019.4,1642.5 L1019.4,1642.5 1025.9,1642.5 1032.3,1642.5 1038.8,1642.5 1045.3,1642.5 1051.7,1642.5 1058.2,1642.5 1064.7,1642.5 1071.1,1642.5 1077.6,1642.5 1084.1,1642.5 1090.6,1642.5 1097.0,1642.5 1103.5,1642.5 1110.0,1642.5 1116.4,1642.5 1122.9,1642.5 1129.4,1642.5 1135.8,1642.5 1142.3,1642.5 1148.8,1642.5 1155.2,1642.5 1161.7,1642.5 1168.2,1642.5 1174.6,1642.5 1181.1,1642.5 1187.6,1642.5 1194.0,1642.5 1200.5,1642.5 1207.0,1448.5 1213.5,1642.5 1219.9,1642.5 1226.4,1642.5 1232.9,1642.5 1239.3,1642.5 1245.8,1642.5 1252.3,1642.5 1258.7,1642.5 1265.2,1642.5 1271.7,1642.5 1278.1,1642.5 1284.6,1642.5 1291.1,1642.5 1297.5,1642.5 1304.0,1642.5 1310.5,1642.5 1316.9,1642.5 1323.4,1642.5 1329.9,1642.5 1336.4,1642.5 1342.8,1642.5 1349.3,1642.5 1355.8,1642.5 1362.2,1642.5 1368.7,1642.5 1375.2,1642.5 1381.6,1642.5 1388.1,1642.5 L1388.1,1642.5 Z" fill="url(#g_ping)"/><polyline points="1019.4,1642.5 1025.9,1642.5 1032.3,1642.5 1038.8,1642.5 1045.3,1642.5 1051.7,1642.5 1058.2,1642.5 1064.7,1642.5 1071.1,1642.5 1077.6,1642.5 1084.1,1642.5 1090.6,1642.5 1097.0,1642.5 1103.5,1642.5 1110.0,1642.5 1116.4,1642.5 1122.9,1642.5 1129.4,1642.5 1135.8,1642.5 1142.3,1642.5 1148.8,1642.5 1155.2,1642.5 1161.7,1642.5 1168.2,1642.5 1174.6,1642.5 1181.1,1642.5 1187.6,1642.5 1194.0,1642.5 1200.5,1642.5 1207.0,1448.5 1213.5,1642.5 1219.9,1642.5 1226.4,1642.5 1232.9,1642.5 1239.3,1642.5 1245.8,1642.5 1252.3,1642.5 1258.7,1642.5 1265.2,1642.5 1271.7,1642.5 1278.1,1642.5 1284.6,1642.5 1291.1,1642.5 1297.5,1642.5 1304.0,1642.5 1310.5,1642.5 1316.9,1642.5 1323.4,1642.5 1329.9,1642.5 1336.4,1642.5 1342.8,1642.5 1349.3,1642.5 1355.8,1642.5 1362.2,1642.5 1368.7,1642.5 1375.2,1642.5 1381.6,1642.5 1388.1,1642.5" fill="none" stroke="#000" stroke-width="3.6" stroke-linejoin="miter"/></svg><div style="position:absolute;left:1470px;top:1236.5px;width:498.5px;height:475.5px;border:1.6px solid #e5e7eb;border-radius:24px;box-sizing:border-box;background:#fff"></div><div class="t" style="left:1497.00px;top:1273.68px;font-size:26.6px;line-height:26.6px;color:#0a0a0a;font-weight:400;letter-spacing:0px;">Signal quality<svg style="display:inline-block;vertical-align:top;margin-left:9.5px;margin-top:-0.5px" width="25" height="25" viewBox="0 0 25 25"><circle cx="12.5" cy="12.5" r="10.6" stroke="#9ca3af" stroke-width="2" fill="none"/><path d="M12.5 11.5v6" stroke="#9ca3af" stroke-width="2.2" stroke-linecap="round"/><circle cx="12.5" cy="7.9" r="1.3" fill="#9ca3af"/></svg></div><div style="position:absolute;left:1497.0px;top:1330.5px;width:139.5px;height:85.5px;background:#f9fafb;border:1.5px solid #e8eaed;border-radius:17px;box-sizing:border-box"></div><div class="t" style="left:1510.60px;top:1349.70px;font-size:20.2px;line-height:20.2px;color:#6b7280;font-weight:400;letter-spacing:0px;">Min (%)</div><div class="t" style="left:1510.60px;top:1377.36px;font-size:23.2px;line-height:23.2px;color:#111827;font-weight:700;letter-spacing:0px;">85</div><div style="position:absolute;left:1650.2px;top:1330.5px;width:139.5px;height:85.5px;background:#f9fafb;border:1.5px solid #e8eaed;border-radius:17px;box-sizing:border-box"></div><div class="t" style="left:1663.80px;top:1349.70px;font-size:20.2px;line-height:20.2px;color:#6b7280;font-weight:400;letter-spacing:0px;">Max (%)</div><div class="t" style="left:1663.80px;top:1377.36px;font-size:23.2px;line-height:23.2px;color:#111827;font-weight:700;letter-spacing:0px;">100</div><div style="position:absolute;left:1803.4px;top:1330.5px;width:139.5px;height:85.5px;background:#f9fafb;border:1.5px solid #e8eaed;border-radius:17px;box-sizing:border-box"></div><div class="t" style="left:1817.00px;top:1349.70px;font-size:20.2px;line-height:20.2px;color:#6b7280;font-weight:400;letter-spacing:0px;">Last (%)</div><div class="t" style="left:1817.00px;top:1377.36px;font-size:23.2px;line-height:23.2px;color:#111827;font-weight:700;letter-spacing:0px;">100</div><div class="t" style="right:1007.10px;top:1440.73px;font-size:15.8px;line-height:15.8px;color:#9ca3af;font-weight:400;letter-spacing:0px;">100%</div><div class="t" style="right:1007.10px;top:1537.73px;font-size:15.8px;line-height:15.8px;color:#9ca3af;font-weight:400;letter-spacing:0px;">50%</div><div class="t" style="right:1007.10px;top:1634.73px;font-size:15.8px;line-height:15.8px;color:#9ca3af;font-weight:400;letter-spacing:0px;">0%</div><div class="t" style="left:1562.20px;transform:translateX(-50%);top:1663.33px;font-size:15.8px;line-height:15.8px;color:#9ca3af;font-weight:400;letter-spacing:0px;">10:54</div><div class="t" style="left:1913.00px;transform:translateX(-50%);top:1663.33px;font-size:15.8px;line-height:15.8px;color:#9ca3af;font-weight:400;letter-spacing:0px;">11:08</div><svg style="position:absolute;left:0;top:0;overflow:visible" width="2550" height="1822"><defs><linearGradient id="g_sig" x1="0" y1="1448.5" x2="0" y2="1634.5" gradientUnits="userSpaceOnUse"><stop offset="0" stop-color="#000" stop-opacity="1"/><stop offset="1" stop-color="#000" stop-opacity="0"/></linearGradient><clipPath id="c_sig"><rect x="1552.2" y="1446.5" width="370.79999999999995" height="204.0"/></clipPath></defs><g clip-path="url(#c_sig)"><path d="M1562.2,1642.5 L1562.2,1449.0 1575.8,1449.0 1580.7,1469.4 1585.8,1474.5 1591.3,1449.0 1667.8,1449.0 1673.1,1455.5 1678.0,1449.0 1735.0,1449.0 1740.4,1450.5 1746.0,1449.0 1913.0,1449.0 L1913,1642.5 Z" fill="url(#g_sig)"/><polyline points="1562.2,1449.0 1575.8,1449.0 1580.7,1469.4 1585.8,1474.5 1591.3,1449.0 1667.8,1449.0 1673.1,1455.5 1678.0,1449.0 1735.0,1449.0 1740.4,1450.5 1746.0,1449.0 1913.0,1449.0" fill="none" stroke="#000" stroke-width="3.6"/></g></svg><div style="position:absolute;left:1995px;top:1236.5px;width:498.5px;height:475.5px;border:1.6px solid #e5e7eb;border-radius:24px;box-sizing:border-box;background:#fff"></div><div class="t" style="left:2022.00px;top:1273.68px;font-size:26.6px;line-height:26.6px;color:#0a0a0a;font-weight:400;letter-spacing:0px;">Obstruction<svg style="display:inline-block;vertical-align:top;margin-left:9.5px;margin-top:-0.5px" width="25" height="25" viewBox="0 0 25 25"><circle cx="12.5" cy="12.5" r="10.6" stroke="#9ca3af" stroke-width="2" fill="none"/><path d="M12.5 11.5v6" stroke="#9ca3af" stroke-width="2.2" stroke-linecap="round"/><circle cx="12.5" cy="7.9" r="1.3" fill="#9ca3af"/></svg></div><div style="position:absolute;left:2022.0px;top:1330.5px;width:139.5px;height:85.5px;background:#f9fafb;border:1.5px solid #e8eaed;border-radius:17px;box-sizing:border-box"></div><div class="t" style="left:2035.60px;top:1349.70px;font-size:20.2px;line-height:20.2px;color:#6b7280;font-weight:400;letter-spacing:0px;">Min (%)</div><div class="t" style="left:2035.60px;top:1377.36px;font-size:23.2px;line-height:23.2px;color:#111827;font-weight:700;letter-spacing:0px;">0.005</div><div style="position:absolute;left:2175.2px;top:1330.5px;width:139.5px;height:85.5px;background:#f9fafb;border:1.5px solid #e8eaed;border-radius:17px;box-sizing:border-box"></div><div class="t" style="left:2188.80px;top:1349.70px;font-size:20.2px;line-height:20.2px;color:#6b7280;font-weight:400;letter-spacing:0px;">Max (%)</div><div class="t" style="left:2188.80px;top:1377.36px;font-size:23.2px;line-height:23.2px;color:#111827;font-weight:700;letter-spacing:0px;">0.005</div><div style="position:absolute;left:2328.4px;top:1330.5px;width:139.5px;height:85.5px;background:#f9fafb;border:1.5px solid #e8eaed;border-radius:17px;box-sizing:border-box"></div><div class="t" style="left:2342.00px;top:1349.70px;font-size:20.2px;line-height:20.2px;color:#6b7280;font-weight:400;letter-spacing:0px;">Last (%)</div><div class="t" style="left:2342.00px;top:1377.36px;font-size:23.2px;line-height:23.2px;color:#111827;font-weight:700;letter-spacing:0px;">0.005</div><div class="t" style="right:470.00px;top:1440.73px;font-size:15.8px;line-height:15.8px;color:#9ca3af;font-weight:400;letter-spacing:0px;">0.005%</div><div class="t" style="right:470.00px;top:1537.73px;font-size:15.8px;line-height:15.8px;color:#9ca3af;font-weight:400;letter-spacing:0px;">0.003%</div><div class="t" style="right:470.00px;top:1634.73px;font-size:15.8px;line-height:15.8px;color:#9ca3af;font-weight:400;letter-spacing:0px;">0%</div><div class="t" style="left:2099.20px;transform:translateX(-50%);top:1663.33px;font-size:15.8px;line-height:15.8px;color:#9ca3af;font-weight:400;letter-spacing:0px;">10:54</div><div class="t" style="left:2437.00px;transform:translateX(-50%);top:1663.33px;font-size:15.8px;line-height:15.8px;color:#9ca3af;font-weight:400;letter-spacing:0px;">11:08</div><svg style="position:absolute;left:0;top:0;overflow:visible" width="2550" height="1822"><defs><linearGradient id="g_obs" x1="0" y1="1448.5" x2="0" y2="1634.5" gradientUnits="userSpaceOnUse"><stop offset="0" stop-color="#000" stop-opacity="1"/><stop offset="1" stop-color="#000" stop-opacity="0"/></linearGradient><clipPath id="c_obs"><rect x="2089.2" y="1446.5" width="357.8000000000002" height="204.0"/></clipPath></defs><g clip-path="url(#c_obs)"><path d="M2099.2,1642.5 L2099.2,1449.5 2250.0,1450.0 2437.0,1451.5 L2437,1642.5 Z" fill="url(#g_obs)"/><polyline points="2099.2,1449.5 2250.0,1450.0 2437.0,1451.5" fill="none" stroke="#000" stroke-width="3.6"/></g></svg><svg style="position:absolute;left:0;top:0;overflow:visible" width="2550" height="1822">
<path d="M379,47 C306.5,55.1 251.7,103.3 234.5,229" stroke="#e8442a" stroke-width="5" fill="none" stroke-dasharray="14 12"/>
<path d="M224,229 L244.5,231.3 L232.5,249.5Z" fill="#e8442a"/>
<path d="M448,355 C571.9,392.4 625.8,466.5 623.6,572" stroke="#e8442a" stroke-width="5" fill="none" stroke-dasharray="14 12"/>
<path d="M613.5,571 L633.5,571 L623.6,589.5Z" fill="#e8442a"/>
<path d="M1673,61 C1591,47.7 1452.2,47 1362,137" stroke="#e8442a" stroke-width="5" fill="none" stroke-dasharray="14 12"/>
<path d="M1355.5,131 L1370.5,144.2 L1350,152Z" fill="#e8442a"/>
</svg><svg style="position:absolute;left:0;top:0;overflow:visible" width="1" height="1"><path d="M387.4,34.6 L394,31 L399.6,31 L399.6,57 L393.6,57 L393.6,38.6 L387.4,38.6 Z" fill="#e8442a"/></svg><div class="t" style="left:407.00px;top:330.53px;font-size:36px;line-height:36px;color:#e8442a;font-weight:700;letter-spacing:0px;">2</div><div class="t" style="left:1679.50px;top:45.83px;font-size:36px;line-height:36px;color:#e8442a;font-weight:700;letter-spacing:0px;">3</div>
</body></html>
